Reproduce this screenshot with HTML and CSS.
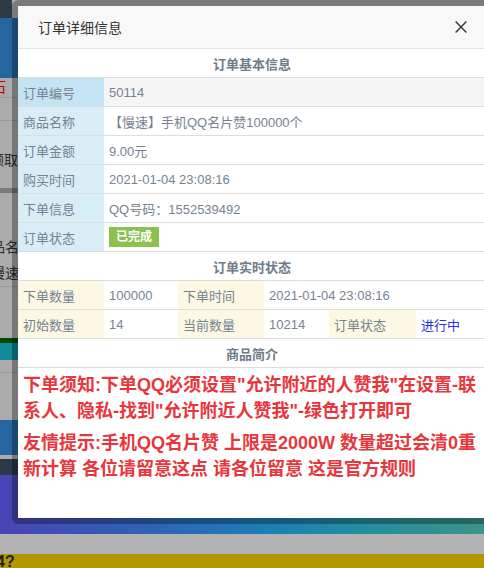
FILE: index.html
```html
<!DOCTYPE html>
<html lang="zh-CN">
<head>
<meta charset="utf-8">
<title>订单详细信息</title>
<link rel="stylesheet" href="styles.css">
</head>
<body>
<div class="page">
  <div class="band b-top"></div>
  <div class="band b-blue"></div>
  <div class="band b-gray g1">
    <div class="ghost red">石</div>
    <div class="rule"></div>
    <div class="gap22"></div>
    <div class="rule"></div>
    <div class="ghost dark lift">领取</div>
  </div>
  <div class="band b-dim"></div>
  <div class="band b-gray g2">
    <div class="ghost dark">品名</div>
    <div class="ghost dark">慢速</div>
    <div class="rule"></div>
  </div>
  <div class="band b-green"></div>
  <div class="band b-teal"></div>
  <div class="band b-gray g3">
    <div class="rule"></div>
  </div>
  <div class="band b-blue2"></div>
  <div class="band b-gray g4"></div>
  <div class="band b-slate"></div>
  <div class="band b-grad"></div>
  <div class="band b-light"></div>
  <div class="band b-gold"><span class="q">4?</span></div>
</div>

<div class="layer">
  <div class="modal">
    <div class="modal-head">
      <span class="modal-title">订单详细信息</span>
      <span class="close" aria-label="关闭">
        <svg width="12" height="12" viewBox="0 0 12 12"><path d="M0.6 0.6 L11.4 11.4 M11.4 0.6 L0.6 11.4" stroke="#333" stroke-width="1.4" fill="none"/></svg>
      </span>
    </div>

    <table class="grid">
      <colgroup><col class="w86"><col></colgroup>
      <tr><th colspan="2" class="sec first">订单基本信息</th></tr>
      <tr class="hover"><td class="lbl info">订单编号</td><td>50114</td></tr>
      <tr><td class="lbl info">商品名称</td><td>【慢速】手机QQ名片赞100000个</td></tr>
      <tr><td class="lbl info">订单金额</td><td>9.00元</td></tr>
      <tr><td class="lbl info">购买时间</td><td>2021-01-04 23:08:16</td></tr>
      <tr><td class="lbl info">下单信息</td><td>QQ号码：1552539492</td></tr>
      <tr><td class="lbl info">订单状态</td><td><span class="badge">已完成</span></td></tr>
    </table>

    <table class="grid">
      <colgroup><col class="w86"><col class="w74"><col class="w86"><col class="w65"><col class="w87"><col></colgroup>
      <tr><th colspan="6" class="sec">订单实时状态</th></tr>
      <tr><td class="lbl warn">下单数量</td><td>100000</td><td class="lbl warn">下单时间</td><td colspan="3">2021-01-04 23:08:16</td></tr>
      <tr><td class="lbl warn">初始数量</td><td>14</td><td class="lbl warn">当前数量</td><td>10214</td><td class="lbl warn">订单状态</td><td class="run">进行中</td></tr>
    </table>

    <table class="grid">
      <tr><th class="sec">商品简介</th></tr>
      <tr><td class="desc">
        <p>下单须知:下单QQ必须设置"允许附近的人赞我"在设置-联系人、隐私-找到"允许附近人赞我"-绿色打开即可</p>
        <p>友情提示:手机QQ名片赞 上限是2000W 数量超过会清0重新计算 各位请留意这点 请各位留意 这是官方规则</p>
      </td></tr>
    </table>
  </div>
</div>
</body>
</html>
```

FILE: styles.css
```css
* { box-sizing: border-box; }

html, body {
  margin: 0;
  padding: 0;
}

body {
  width: 484px;
  height: 568px;
  overflow: hidden;
  position: relative;
  font-family: "Liberation Sans", "Noto Sans CJK SC", sans-serif;
  background: #b0b0b0;
}

/* ---------- dimmed page behind the dialog ---------- */
.page {
  display: flex;
  flex-direction: column;
}

.band { width: 100%; flex: none; }

.b-top   { height: 18px; background: linear-gradient(90deg, #2e3a46 12px, #b0b0b0 12px); }
.b-blue  { height: 60px; background: #2566a0; }
.b-gray  { background: #ababab; overflow: hidden; }
.g1      { height: 110px; }
.b-dim   { height: 5px; background: #7a7a7a; }
.g2      { height: 145px; padding-top: 41px; }
.b-green { height: 5px; background: #004a00; }
.b-teal  { height: 17px; background: #128a9a; }
.g3      { height: 60px; padding-top: 12px; }
.b-blue2 { height: 35px; background: #2566a0; }
.g4      { height: 4px; }
.b-slate { height: 16px; background: #2b3a4a; }
.b-grad  { height: 59px; background: linear-gradient(90deg, #4a44b6 0%, #2f62b4 30%, #1b7fb6 55%, #278f9c 78%, #3a9488 100%); }
.b-light { height: 20px; background: #b3b3b3; }
.b-gold  { height: 14px; background: #b39700; overflow: hidden; }

.rule { height: 1px; background: #999; }
.gap22 { height: 22px; }

.ghost {
  font-size: 14px;
  line-height: 26px;
  white-space: nowrap;
  margin-left: -9px;
}
.ghost.red  { color: #b80000; margin-left: -8px; line-height: 19px; }
.ghost.dark { color: #2a2a2a; }
.ghost.lift { margin-top: 26px; margin-left: -10px; }

.q {
  display: block;
  font-weight: bold;
  font-size: 16px;
  line-height: 14px;
  color: #1e1e1e;
  margin-left: -4px;
  margin-top: 1px;
}

/* ---------- dialog ---------- */
.layer {
  position: absolute;
  top: 0;
  left: 12px;
}

.modal {
  width: 480px;
  height: 524px;
  border: 6px solid rgba(0, 0, 0, 0.3);
  border-radius: 6px;
  background: #fff;
  background-clip: padding-box;
  overflow: hidden;
}

.modal-head {
  height: 42px;
  background: #f8f8f8;
  display: flex;
  align-items: center;
  justify-content: space-between;
  padding: 0 19px 0 20px;
}

.modal-title {
  font-size: 14px;
  color: #333;
}

.close {
  display: flex;
  width: 12px;
  height: 12px;
}

.grid {
  width: 468px;
  border-collapse: separate;
  border-spacing: 0;
  table-layout: fixed;
}

.w86 { width: 86px; }
.w74 { width: 74px; }
.w65 { width: 65px; }
.w87 { width: 87px; }

.grid th,
.grid td {
  height: 29px;
  padding: 0 5px;
  border-top: 1px solid #ddd;
  font-size: 13px;
  color: #76838f;
  text-align: left;
  vertical-align: middle;
  white-space: nowrap;
  overflow: hidden;
}

.grid th.sec {
  text-align: center;
  font-weight: bold;
  color: #6e7b89;
  background: #fff;
}
.grid th.first { border-top-color: #e5e5e5; }

.lbl.info { background: #d9edf7; }
.lbl.warn { background: #fcf8e3; }
.hover td { background: #f5f5f5; }
.hover td.lbl.info { background: #c4e3f3; }

.badge {
  display: inline-block;
  height: 20px;
  line-height: 20px;
  padding: 0 7px;
  background: #8cc152;
  color: #fff;
  font-size: 12px;
  font-weight: bold;
  vertical-align: middle;
}

.grid td.run { color: #2b2bf0; }

.grid td.desc {
  height: auto;
  padding: 4px 1px 0 5px;
  white-space: normal;
  vertical-align: top;
}

.desc p {
  margin: 0 0 6px;
  font-size: 18px;
  line-height: 26px;
  font-weight: bold;
  color: #e8363c;
}
```
